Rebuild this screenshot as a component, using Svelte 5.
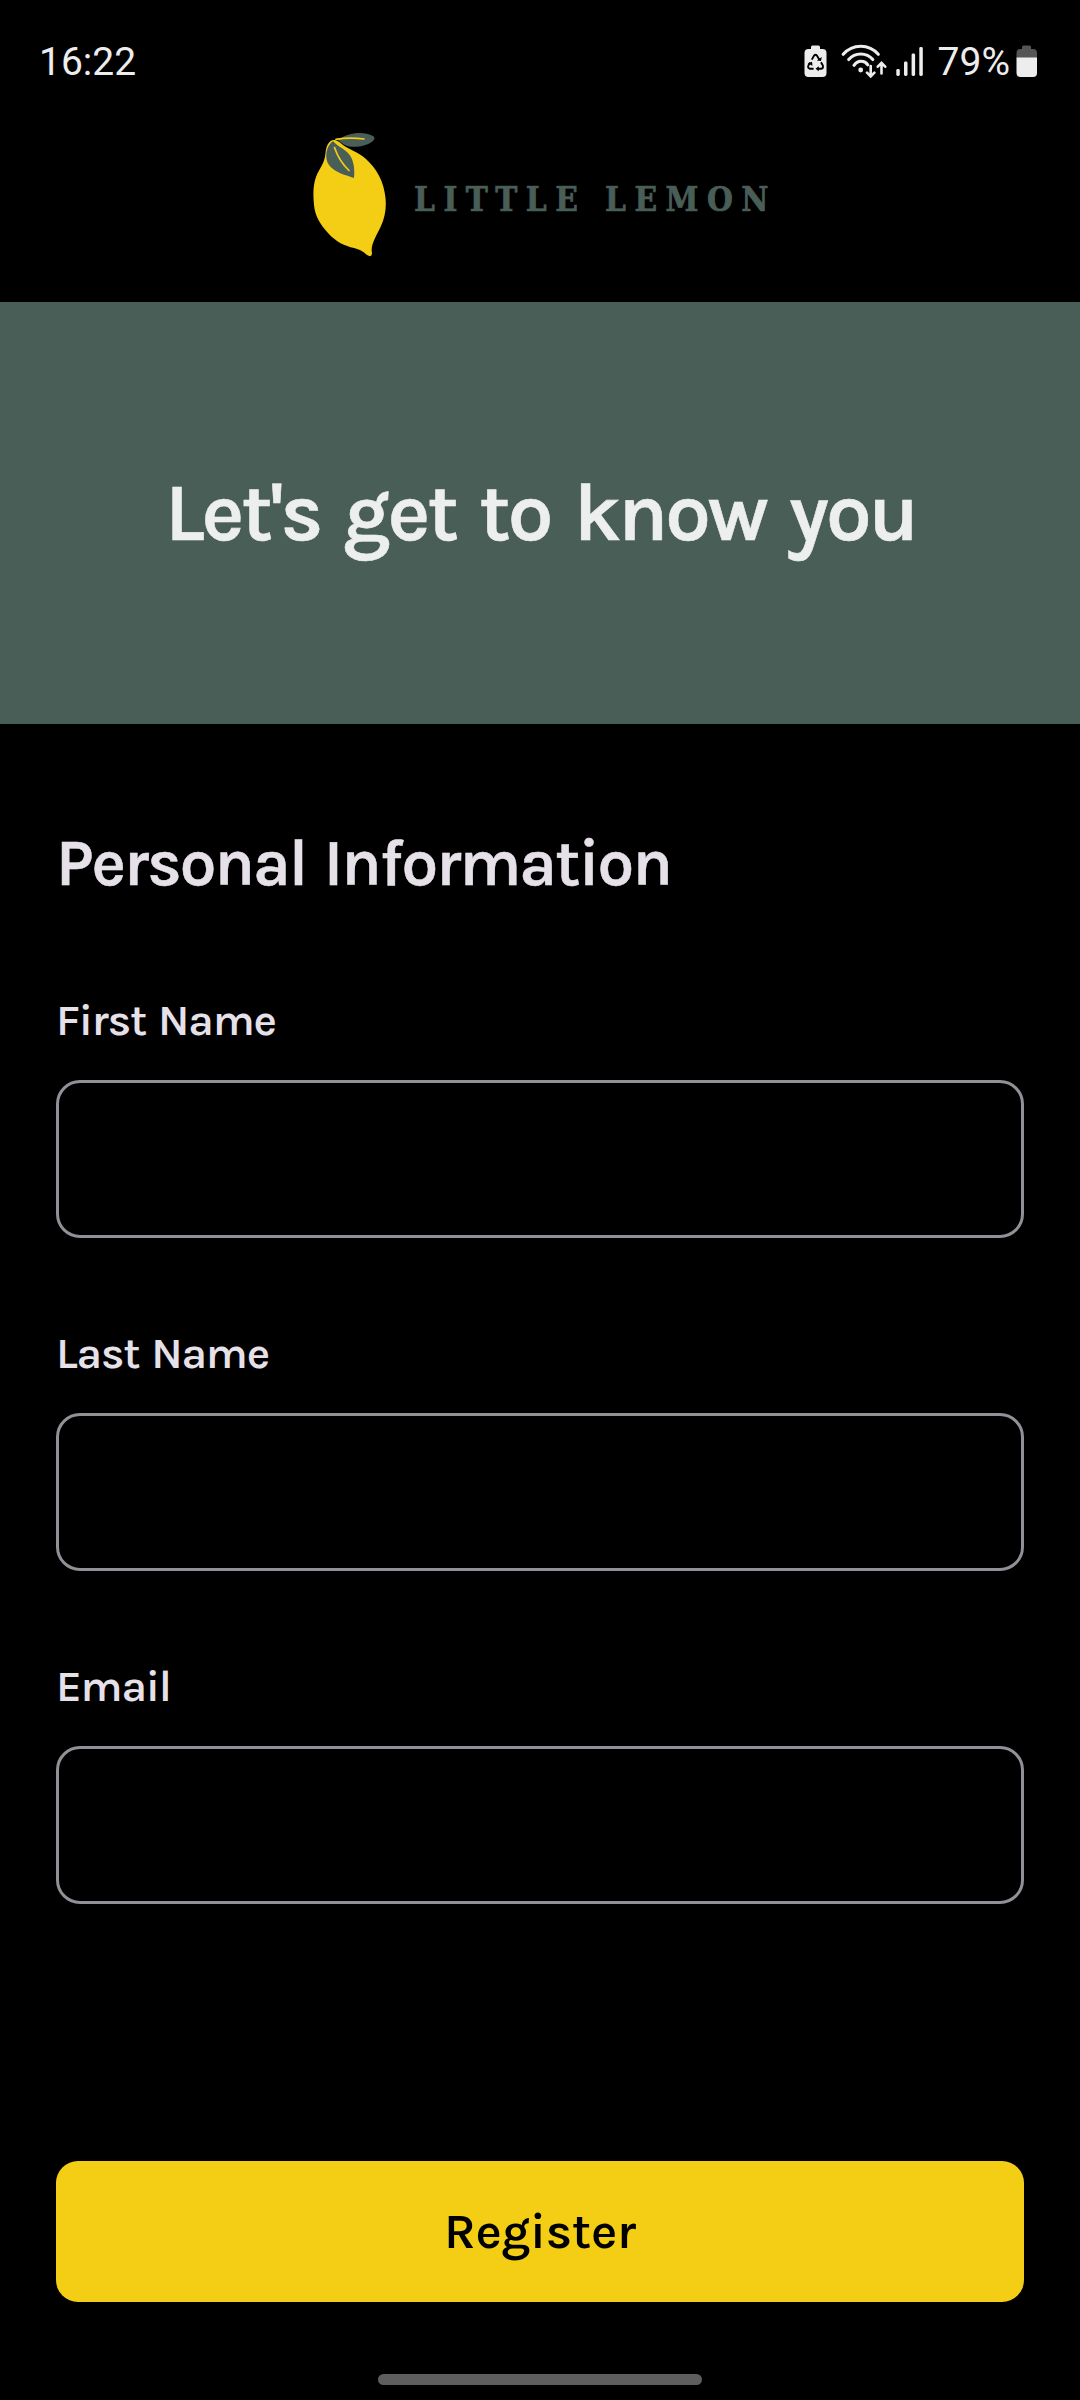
<script lang="ts">
  const fields = [
    { id: 'first', label: 'First Name' },
    { id: 'last', label: 'Last Name' },
    { id: 'email', label: 'Email' },
  ];
</script>

<div class="screen">
  <header class="status">
    <span class="time">16:22</span>
    <div class="tray">
      <svg class="saver" width="24" height="34" viewBox="0 0 24 34">
        <path fill="#ededed" d="M7 4V2q0-1.500 1.500-1.500h6q1.500 0 1.500 1.500v2h2.500q4 0 4 4V28q0 4-4 4h-14q-4 0-4-4V8q0-4 4-4z" />
        <g fill="none" stroke="#000" stroke-width="1.900">
          <path d="M7.800 14.600l2.300-4q1.400-1.700 2.800 0l2.500 4.200" />
          <path d="M17 17.300l1.800 3.200q.9 2.900-1.600 3.300h-3.700" />
          <path d="M9.600 23.800H6q-2.700-.6-1.600-3.300l1.700-2.900" />
        </g>
        <path d="M12.800 15.500l4.200.6.800-4zM14.800 21.200v5l-3.300-2.500zM3.600 18.600l4.400-1.800.5 4z" />
      </svg>
      <svg class="wifi" width="46" height="36" viewBox="0 0 46 36">
        <g fill="none" stroke="#ededed" stroke-width="3.100" stroke-linecap="round">
          <path d="M2.200 10.300C11.500-.5 28-.5 37.300 10.300" />
          <path d="M7.700 15.600C14 8.100 25.500 8.100 31.800 15.600" />
          <path d="M13 21.300C16.500 16 23.500 16 26.800 20.800" />
          <path d="M29.700 22v10M26 28.700l3.700 3.800 3.700-3.800M40.500 29.500V19.300M36.800 22.700l3.700-3.800 3.700 3.800" stroke-width="2.600" />
        </g>
        <circle cx="19.700" cy="26" r="2.400" fill="#ededed" />
      </svg>
      <svg class="signal" width="28" height="30" viewBox="0 0 28 30">
        <g fill="#ededed">
          <rect x="0.300" y="22" width="3.500" height="7" rx="1.400" />
          <rect x="8" y="14.500" width="3.500" height="14.500" rx="1.400" />
          <rect x="15.600" y="6.500" width="3.500" height="22.500" rx="1.400" />
          <rect x="23.300" y="0" width="3.500" height="29" rx="1.400" />
        </g>
      </svg>
      <span class="percent">79%</span>
      <svg class="battery" width="22" height="34" viewBox="0 0 22 34">
        <path fill="#555" d="M6 4V2Q6 .5 7.500.5h6q1.500 0 1.500 1.500v2h2q4 0 4 4v5H.5V8q0-4 4-4z" />
        <path fill="#ededed" d="M.5 12.500H21V28q0 4-4 4H4.500q-4 0-4-4z" />
      </svg>
    </div>
  </header>

  <div class="brand">
    <svg class="lemon" width="80" height="130" viewBox="0 0 80 130">
      <path fill="#f4ce14" d="M23 8C16 7 14 16 13.500 21C13 31 7 37 4 45C1 53 1 63 2 73C3 85 9 93 16 101C24 110 33 114 42 116C49 118 52 120 55 123Q60 126 60 121C58 113 65 103 69 94C73 85 74.500 76 73.500 66C72 50 65 37 54 27C46 20 38 18 31 13Q27 9 23 8Z" />
      <path fill="#495e57" d="M26 8C36 0 52-1 61 4Q64 6 61 9C54 15 38 17 31 12Q28 10 26 8Z" />
      <path fill="#495e57" d="M21 9C14 14 12 26 17 33C23 41 34 43 42 46C43 38 42 27 36 21C31 16 25 14 21 9Z" />
      <path fill="none" stroke="#f4ce14" stroke-width="1.700" stroke-linecap="round" d="M24 7.300Q38 5.300 52 7M22.500 15.500Q27 29 37 38.500" />
    </svg>
    <span class="wordmark">LITTLE LEMON</span>
  </div>

  <section class="hero"><h1>Let's get to know you</h1></section>

  <main>
    <h2>Personal Information</h2>
    <form>
      {#each fields as f}
        <div class="field">
          <label for={f.id}>{f.label}</label>
          <input id={f.id} type="text" />
        </div>
      {/each}
      <button type="button">Register</button>
    </form>
  </main>
  <div class="home"></div>
</div>

<style>
  :global(body) { margin: 0; background: #000; }
  .screen {
    width: 1080px;
    height: 2400px;
    background: #000;
    display: flex;
    flex-direction: column;
    font-family: Karla, Inter, sans-serif;
    font-weight: 600;
    color: #e6e1e9;
    overflow: hidden;
  }
  .status {
    height: 122px;
    box-sizing: border-box;
    padding: 2px 42px 0 39px;
    display: flex;
    align-items: center;
    justify-content: space-between;
    font-family: Roboto, sans-serif;
    font-weight: 400;
    font-size: 39px;
    color: #ededed;
  }
  .tray { display: flex; align-items: center; }
  .wifi { margin-left: 13px; }
  .signal { margin-left: 9px; }
  .percent { margin: 0 6px 0 14px; }
  .brand {
    height: 180px;
    box-sizing: border-box;
    padding-left: 312px;
    display: flex;
    align-items: flex-start;
  }
  .lemon { margin-top: 10px; }
  .wordmark {
    margin: 58px 0 0 22px;
    font: bold 33px/40px 'DejaVu Serif Condensed', 'DejaVu Serif', serif;
    font-stretch: condensed;
    letter-spacing: 8.500px;
    -webkit-text-stroke: 0.700px #495e57;
    color: #495e57;
    white-space: nowrap;
  }
  .hero {
    height: 422px;
    background: #495e57;
    display: flex;
    justify-content: center;
  }
  h1 {
    margin: 161px 0 0;
    padding-left: 1px;
    font-size: 81.500px;
    line-height: 100px;
    font-weight: 600;
    -webkit-text-stroke: 0.600px #edefee;
    color: #edefee;
    white-space: nowrap;
    letter-spacing: -3.100px;
    word-spacing: 6px;
  }
  main { padding: 0 56px; }
  h2 {
    margin: 100px 0 1px;
    font-size: 65.500px;
    line-height: 80px;
    font-weight: 600;
    -webkit-text-stroke: 0.500px #e6e1e9;
    white-space: nowrap;
    letter-spacing: -1.950px;
    word-spacing: 3px;
  }
  form { display: flex; flex-direction: column; }
  .field { height: 333px; display: flex; flex-direction: column; justify-content: flex-end; }
  label { font-size: 44.500px; line-height: 50px; margin-bottom: 35px; letter-spacing: -1.200px; word-spacing: 2px; }
  input {
    box-sizing: border-box;
    height: 158px;
    border: 3px solid #938f96;
    border-radius: 24px;
    background: transparent;
    color: inherit;
    font: inherit;
    outline: none;
  }
  button {
    margin-top: 257px;
    height: 141px;
    padding: 0;
    border: 0;
    border-radius: 22px;
    background: #f4ce14;
    color: #000;
    font: 600 50px/50px Karla, Inter, sans-serif;
    letter-spacing: -0.300px;
  }
  .home { width: 324px; height: 11px; border-radius: 6px; background: #5e5e5e; margin: 72px auto 0; }
</style>
